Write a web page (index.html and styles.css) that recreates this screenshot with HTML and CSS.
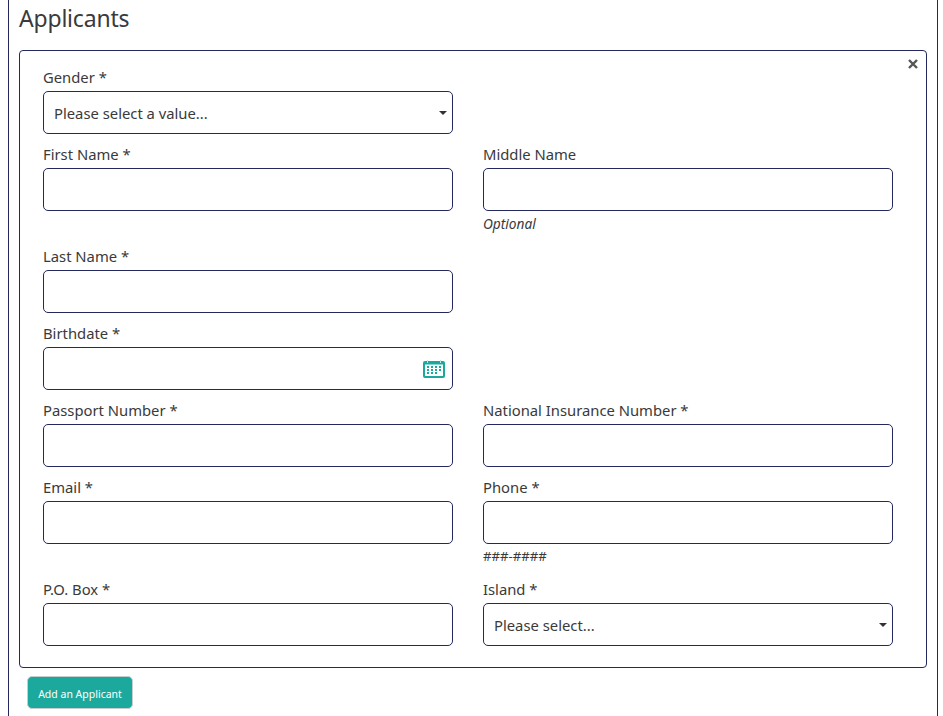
FILE: index.html
```html
<!DOCTYPE html>
<html>
<head>
  <title>Applicants</title>
  <link rel="stylesheet" href="styles.css">
</head>
<body>
  <div class="page">
    <h2 class="title">Applicants</h2>
    <div class="card">
      <svg class="close" width="10" height="10" viewBox="0 0 10 10"><path d="M1 1l8 8M9 1l-8 8" stroke="#555" stroke-width="2.400" fill="none"/></svg>
      <div class="row">
        <div class="field">
          <label>Gender *</label>
          <div class="input select">Please select a value...<span class="caret"></span></div>
        </div>
      </div>
      <div class="row">
        <div class="field">
          <label>First Name *</label>
          <div class="input"></div>
        </div>
        <div class="field">
          <label>Middle Name</label>
          <div class="input"></div>
          <div class="hint optional">Optional</div>
        </div>
      </div>
      <div class="row">
        <div class="field">
          <label>Last Name *</label>
          <div class="input"></div>
        </div>
      </div>
      <div class="row">
        <div class="field">
          <label>Birthdate *</label>
          <div class="input date">
            <svg width="22" height="18" viewBox="0 0 22 18">
              <rect x="0" y="1" width="22" height="17" rx="2" fill="#1aa99c"/>
              <rect x="2" y="4.500" width="18" height="11.500" fill="#fff"/>
              <rect x="4" y="0" width="1" height="3" fill="#bfe6e2"/>
              <rect x="17" y="0" width="1" height="3" fill="#bfe6e2"/>
              <g fill="#1aa99c">
                <rect x="4" y="6" width="2" height="2"/><rect x="8" y="6" width="2" height="2"/><rect x="12" y="6" width="2" height="2"/><rect x="16" y="6" width="2" height="2"/>
                <rect x="4" y="9" width="2" height="2"/><rect x="8" y="9" width="2" height="2"/><rect x="12" y="9" width="2" height="2"/><rect x="16" y="9" width="2" height="2"/>
                <rect x="4" y="12" width="2" height="2"/><rect x="8" y="12" width="2" height="2"/><rect x="12" y="12" width="2" height="2"/>
              </g>
            </svg>
          </div>
        </div>
      </div>
      <div class="row">
        <div class="field">
          <label>Passport Number *</label>
          <div class="input"></div>
        </div>
        <div class="field">
          <label>National Insurance Number *</label>
          <div class="input"></div>
        </div>
      </div>
      <div class="row">
        <div class="field">
          <label>Email *</label>
          <div class="input"></div>
        </div>
        <div class="field">
          <label>Phone *</label>
          <div class="input"></div>
          <div class="hint">###-####</div>
        </div>
      </div>
      <div class="row">
        <div class="field">
          <label>P.O. Box *</label>
          <div class="input"></div>
        </div>
        <div class="field">
          <label>Island *</label>
          <div class="input select">Please select...<span class="caret"></span></div>
        </div>
      </div>
    </div>
    <button class="add">Add an Applicant</button>
  </div>
</body>
</html>
```

FILE: styles.css
```css
html, body {
  margin: 0;
  height: 716px;
  overflow: hidden;
  background: #fff;
}
body {
  font-family: "Noto Sans", "Open Sans", sans-serif;
  font-size: 14.800px;
  color: #3a3a3a;
}
.page {
  box-sizing: border-box;
  width: 930px;
  height: 716px;
  margin-left: 8px;
  padding: 0 10px;
  border-left: 1px solid #23295f;
  border-right: 1px solid #23295f;
}
.title {
  margin: 0;
  height: 50px;
  padding-top: 2px;
  box-sizing: border-box;
  font-size: 23px;
  font-weight: 400;
  letter-spacing: -0.200px;
  line-height: 32px;
}
.card {
  position: relative;
  box-sizing: border-box;
  height: 618px;
  padding: 15px 33px 0 23px;
  border: 1px solid #23295f;
  border-radius: 4px;
}
.close {
  position: absolute;
  top: 8px;
  right: 8px;
}
.row {
  display: grid;
  grid-template-columns: 410px 410px;
  column-gap: 30px;
}
.field {
  display: flex;
  flex-direction: column;
  margin-bottom: 9px;
}
label {
  height: 25px;
  line-height: 22px;
}
.input {
  box-sizing: border-box;
  height: 43px;
  padding: 0 10px;
  border: 1px solid #23295f;
  border-radius: 5px;
  display: flex;
  align-items: center;
  justify-content: space-between;
}
.date {
  justify-content: flex-end;
  padding: 1px 7px 0 0;
}
.caret {
  width: 0;
  height: 0;
  margin-right: -5px;
  border-top: 4px solid #333;
  border-left: 4px solid transparent;
  border-right: 4px solid transparent;
}
.hint {
  height: 25px;
  line-height: 25px;
  font-size: 13.200px;
}
.optional {
  font-size: 13.700px;
  font-style: italic;
}
.add {
  display: block;
  box-sizing: border-box;
  width: 106px;
  height: 33px;
  margin: 8px 0 0 8px;
  padding: 2px 0 0;
  background: #1aa99c;
  border: 1px solid #c4cfcd;
  border-radius: 5px;
  color: #fff;
  font-family: inherit;
  font-size: 10.500px;
}
```
